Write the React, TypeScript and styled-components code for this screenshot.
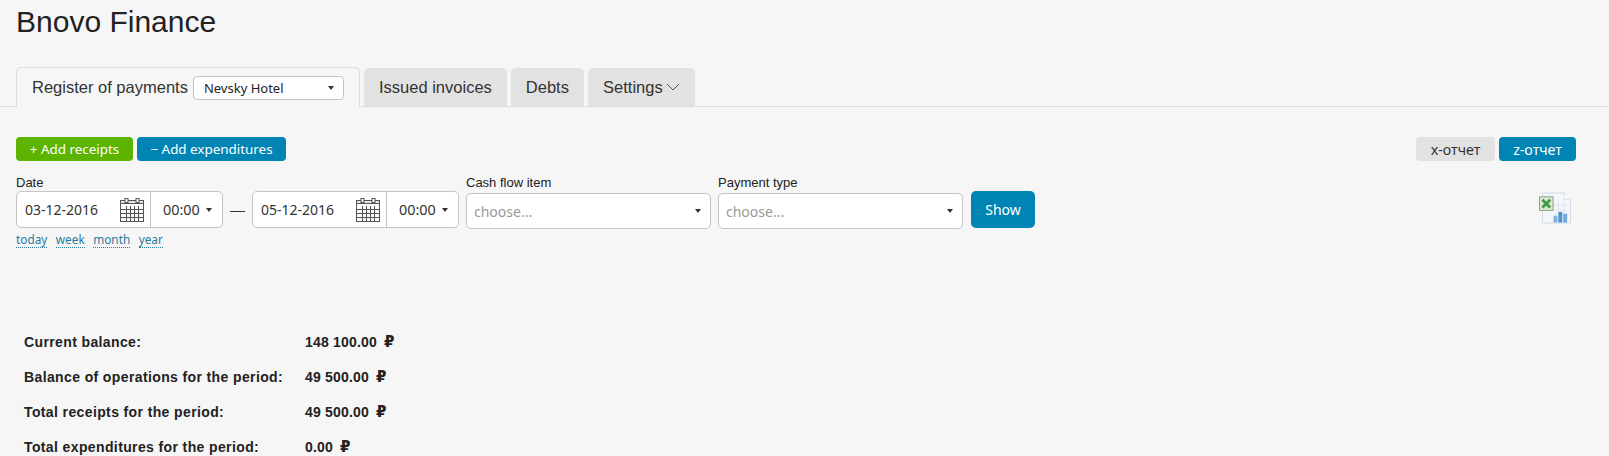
import React from "react";
import styled, { createGlobalStyle } from "styled-components";

const GlobalStyle = createGlobalStyle`
  html, body {
    margin: 0;
    padding: 0;
    height: 100%;
    overflow: hidden;
    background: #f6f6f6;
    color: #222;
    font-family: "Liberation Sans", Arial, sans-serif;
  }
`;

const uiFont = `"Noto Sans", "Open Sans", sans-serif`;

const Page = styled.div`
  width: 1609px;
  height: 456px;
  overflow: hidden;
`;

const Title = styled.h1`
  margin: 0;
  padding: 5px 0 0 16px;
  height: 67px;
  box-sizing: border-box;
  font-size: 30px;
  line-height: 34px;
  font-weight: 400;
  color: #222;
`;

const TabBar = styled.div`
  display: flex;
  align-items: flex-end;
  gap: 4px;
  height: 39px;
  padding-left: 16px;
  border-bottom: 1px solid #dcdcdc;
`;

const Tab = styled.div<{ $active?: boolean; $w?: number }>`
  box-sizing: border-box;
  display: flex;
  align-items: center;
  justify-content: center;
  width: ${(p) => (p.$w ? `${p.$w}px` : "auto")};
  height: ${(p) => (p.$active ? "40px" : "38px")};
  padding: ${(p) => (p.$active ? "0 15px" : "0")};
  margin-bottom: ${(p) => (p.$active ? "-1px" : "0")};
  font-size: 16.5px;
  color: #333;
  border-radius: 5px 5px 0 0;
  background: ${(p) => (p.$active ? "#f6f6f6" : "#e2e2e2")};
  border: ${(p) => (p.$active ? "1px solid #dcdcdc" : "none")};
  border-bottom: none;
`;

const TabSelect = styled.div`
  box-sizing: border-box;
  display: flex;
  align-items: center;
  justify-content: space-between;
  width: 151px;
  height: 24px;
  margin-left: 5px;
  padding: 0 9px 0 10px;
  background: #fff;
  border: 1px solid #c4c4c4;
  border-radius: 4px;
  font-family: ${uiFont};
  font-size: 13px;
  color: #222;
`;

const Caret = styled.span`
  width: 0;
  height: 0;
  border-left: 3.5px solid transparent;
  border-right: 3.5px solid transparent;
  border-top: 4px solid #333;
`;

const Toolbar = styled.div`
  display: flex;
  justify-content: space-between;
  padding: 30px 33px 0 16px;
`;

const ButtonGroup = styled.div`
  display: flex;
  gap: 4px;
`;

const Btn = styled.div<{ $tone: "green" | "blue" | "grey"; $w: number; $size?: number }>`
  box-sizing: border-box;
  display: flex;
  align-items: center;
  justify-content: center;
  width: ${(p) => p.$w}px;
  height: 24px;
  border-radius: 4px;
  font-family: ${uiFont};
  font-size: ${(p) => p.$size || 13.4}px;
  color: ${(p) => (p.$tone === "grey" ? "#333" : "#fff")};
  background: ${(p) =>
    p.$tone === "green" ? "#5cb300" : p.$tone === "blue" ? "#0084b3" : "#e2e2e2"};
`;

const Filters = styled.div`
  display: flex;
  align-items: flex-start;
  padding: 13px 38px 0 16px;
`;

const Field = styled.div<{ $ml?: number }>`
  display: flex;
  flex-direction: column;
  margin-left: ${(p) => p.$ml || 0}px;
`;

const Label = styled.label<{ $h?: number }>`
  display: block;
  height: ${(p) => p.$h || 17}px;
  font-size: 13px;
  line-height: 17px;
  color: #222;
`;

const DateRow = styled.div`
  display: flex;
  align-items: center;
`;

const Dash = styled.span`
  width: 29px;
  text-align: center;
  font-size: 15px;
  color: #333;
`;

const DateBox = styled.div`
  box-sizing: border-box;
  display: flex;
  width: 207px;
  height: 37px;
  background: #fff;
  border: 1px solid #c4c4c4;
  border-radius: 5px;
`;

const DatePart = styled.div`
  display: flex;
  align-items: center;
  justify-content: space-between;
  width: 134px;
  padding: 0 6px 0 8px;
  box-sizing: border-box;
  border-right: 1px solid #c4c4c4;
  font-family: ${uiFont};
  font-size: 14px;
  color: #333;
`;

const TimePart = styled.div`
  flex: 1;
  display: flex;
  align-items: center;
  gap: 6px;
  padding-left: 12px;
  font-family: ${uiFont};
  font-size: 14.4px;
  color: #333;
`;

const Shortcuts = styled.div`
  display: flex;
  gap: 8.5px;
  margin-top: 4px;
`;

const Shortcut = styled.a`
  font-family: ${uiFont};
  font-size: 11.8px;
  line-height: 15px;
  color: #2a7a9c;
  border-bottom: 1px dotted #2a7a9c;
`;

const SelectBox = styled.div`
  box-sizing: border-box;
  display: flex;
  align-items: center;
  justify-content: space-between;
  width: 245px;
  height: 36px;
  padding: 0 9px 0 7px;
  background: #fff;
  border: 1px solid #c4c4c4;
  border-radius: 5px;
  font-family: ${uiFont};
  font-size: 14px;
  color: #999;
`;

const ShowBtn = styled.div`
  box-sizing: border-box;
  display: flex;
  align-items: center;
  justify-content: center;
  width: 64px;
  height: 37px;
  margin: 17px 0 0 8px;
  border-radius: 5px;
  background: #0084b3;
  color: #fff;
  font-family: ${uiFont};
  font-size: 14px;
`;

const ExcelWrap = styled.div`
  margin: 18px 0 0 auto;
  height: 32px;
`;

const Summary = styled.div`
  display: grid;
  grid-template-columns: 281px auto;
  justify-content: start;
  grid-auto-rows: 35px;
  align-items: center;
  margin: 76px 0 0 24px;
  font-size: 14px;
  font-weight: 700;
  color: #222;
  letter-spacing: 0.2px;
`;

const SummaryLabel = styled.span`
  letter-spacing: 0.38px;
`;

const Ruble = styled.span`
  margin-left: 7px;
  font-family: "DejaVu Sans", sans-serif;
  font-size: 15px;
  line-height: 14px;
`;

const CalendarIcon = () => (
  <svg width="24" height="24" viewBox="0 0 24 24">
    <rect x="0.5" y="2.5" width="23" height="21" fill="#fbfbfb" stroke="#555" />
    <rect x="0.5" y="2.5" width="23" height="3" fill="#e6e6e6" stroke="#555" />
    <rect x="5" y="0.5" width="3" height="4" fill="#fff" stroke="#555" />
    <rect x="16" y="0.5" width="3" height="4" fill="#fff" stroke="#555" />
    <path
      d="M1 11.5H23M1 15.5H23M1 19.5H23M6.5 8V23M10.5 8V23M14.5 8V23M18.5 8V23"
      stroke="#555"
      fill="none"
    />
  </svg>
);

const ExcelIcon = () => (
  <svg width="32" height="32" viewBox="0 0 33 32">
    <path d="M3.5 0.5H26L32.5 7V31.5H3.5Z" fill="#f3f6fa" stroke="#d5dbe2" />
    <path d="M26 0.5V7H32.5" fill="#fff" stroke="#d5dbe2" />
    <path d="M15 13H30M15 18H30M15 23H30M20 9V30M26 9V30" stroke="#dfe6ee" fill="none" />
    <rect x="15" y="24" width="4" height="7" fill="#7fb2de" />
    <rect x="20" y="20" width="4" height="11" fill="#4a94cf" />
    <rect x="25" y="22" width="4" height="9" fill="#6ea8da" />
    <rect x="0.5" y="4.5" width="14" height="14" fill="#dbe8d2" stroke="#86a878" />
    <path d="M3.5 7.5L11.5 15.5M11.5 7.5L3.5 15.5" stroke="#3f9a4a" strokeWidth="3" fill="none" />
  </svg>
);

const rows = [
  ["Current balance:", "148 100.00"],
  ["Balance of operations for the period:", "49 500.00"],
  ["Total receipts for the period:", "49 500.00"],
  ["Total expenditures for the period:", "0.00"],
];

export default function App() {
  return (
    <Page>
      <GlobalStyle />
      <Title>Bnovo Finance</Title>
      <TabBar>
        <Tab $active>
          Register of payments
          <TabSelect>
            Nevsky Hotel
            <Caret />
          </TabSelect>
        </Tab>
        <Tab $w={143}>Issued invoices</Tab>
        <Tab $w={73}>Debts</Tab>
        <Tab $w={107}>
          Settings
          <svg width="14" height="8" viewBox="0 0 14 8" style={{ marginLeft: 3 }}>
            <path d="M1 1L7 7L13 1" stroke="#555" fill="none" />
          </svg>
        </Tab>
      </TabBar>

      <Toolbar>
        <ButtonGroup>
          <Btn $tone="green" $w={117}>+ Add receipts</Btn>
          <Btn $tone="blue" $w={149}>− Add expenditures</Btn>
        </ButtonGroup>
        <ButtonGroup>
          <Btn $tone="grey" $w={79} $size={14.2}>x-отчет</Btn>
          <Btn $tone="blue" $w={77} $size={14.2}>z-отчет</Btn>
        </ButtonGroup>
      </Toolbar>

      <Filters>
        <Field>
          <Label>Date</Label>
          <DateRow>
            <DateBox>
              <DatePart>
                03-12-2016
                <CalendarIcon />
              </DatePart>
              <TimePart>
                00:00
                <Caret />
              </TimePart>
            </DateBox>
            <Dash>—</Dash>
            <DateBox>
              <DatePart>
                05-12-2016
                <CalendarIcon />
              </DatePart>
              <TimePart>
                00:00
                <Caret />
              </TimePart>
            </DateBox>
          </DateRow>
          <Shortcuts>
            <Shortcut>today</Shortcut>
            <Shortcut>week</Shortcut>
            <Shortcut>month</Shortcut>
            <Shortcut>year</Shortcut>
          </Shortcuts>
        </Field>
        <Field $ml={7}>
          <Label $h={19}>Cash flow item</Label>
          <SelectBox>
            choose...
            <Caret />
          </SelectBox>
        </Field>
        <Field $ml={7}>
          <Label $h={19}>Payment type</Label>
          <SelectBox>
            choose...
            <Caret />
          </SelectBox>
        </Field>
        <ShowBtn>Show</ShowBtn>
        <ExcelWrap>
          <ExcelIcon />
        </ExcelWrap>
      </Filters>

      <Summary>
        {rows.map(([label, value]) => (
          <React.Fragment key={label}>
            <SummaryLabel>{label}</SummaryLabel>
            <span>
              {value}
              <Ruble>₽</Ruble>
            </span>
          </React.Fragment>
        ))}
      </Summary>
    </Page>
  );
}
